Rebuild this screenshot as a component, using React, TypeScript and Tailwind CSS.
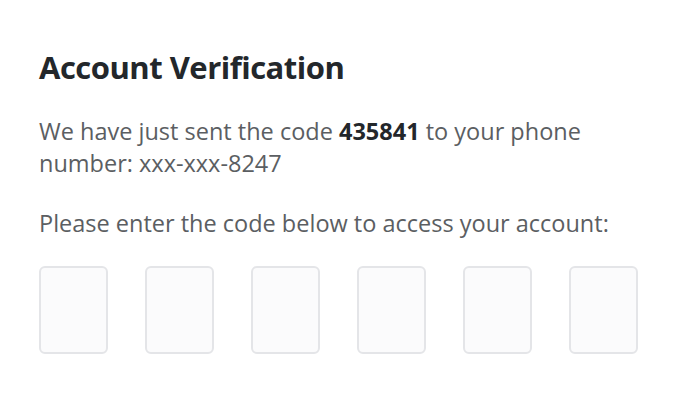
export default function App() {
  const boxes = [0, 1, 2, 3, 4, 5];
  return (
    <div className="min-h-screen bg-white" style={{ fontFamily: '"Open Sans", "Noto Sans", sans-serif' }}>
      <div className="w-[660px] pl-[39px] pt-[45px]">
        <h1 className="text-[31px] font-bold leading-[44px] tracking-[-0.5px] text-[#23272b]">Account Verification</h1>
        <p className="mt-[26px] w-[600px] text-[23.5px] leading-[32px] text-[#5b5e62]">
          We have just sent the code <span className="font-bold text-[#23272b]">435841</span> to your phone number: xxx-xxx-8247
        </p>
        <p className="mt-[28px] text-[23.5px] leading-[32px] text-[#5b5e62]">
          Please enter the code below to access your account:
        </p>
        <div className="mt-[27px] flex gap-[37px]">
          {boxes.map((i) => (
            <input
              key={i}
              type="text"
              maxLength={1}
              className="h-[88px] w-[69px] rounded-[6px] border-2 border-[#e4e5e8] bg-[#fbfbfc] text-center text-2xl outline-none"
            />
          ))}
        </div>
      </div>
    </div>
  );
}
